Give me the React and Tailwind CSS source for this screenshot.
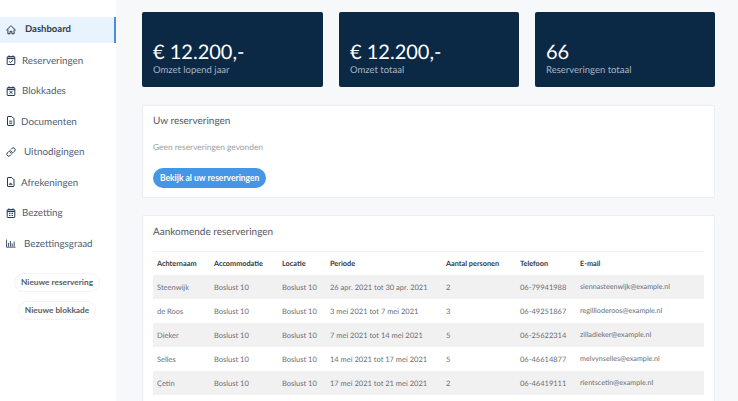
import React from 'react';

// Hand drawn nav icons, all on a 10x10 grid
const Svg = ({ children }) => (
  <svg width="10" height="10" viewBox="0 0 10 10" fill="none" stroke="#24384f" strokeWidth="1" className="-mt-[2px] shrink-0">
    {children}
  </svg>
);

const CalendarBase = ({ children }) => (
  <Svg>
    <rect x="1.2" y="1.6" width="7.6" height="7.9" rx="0.6" />
    <path d="M1.2 3.4h7.6" strokeWidth="1.4" />
    <path d="M3 0.4v1.6M7 0.4v1.6" />
    {children}
  </Svg>
);

const HomeIcon = () => (
  <Svg>
    <path d="M0.6 4.9 4.4 1.3a.9.9 0 0 1 1.2 0l3.8 3.6" strokeLinecap="round" />
    <path d="M1.9 4.4v4.4h2.2V6.4h1.8v2.4h2.2V4.4" strokeLinejoin="round" />
  </Svg>
);
const CheckIcon = () => <CalendarBase><path d="M3.1 6.4 4.4 7.6 6.9 5.2" /></CalendarBase>;
const CrossIcon = () => <CalendarBase><path d="M3.6 5 6.4 7.8M6.4 5 3.6 7.8" /></CalendarBase>;
const DocIcon = () => (
  <Svg>
    <path d="M1.5 1a.5.5 0 0 1 .5-.5h3.8L8 2.8V9a.5.5 0 0 1-.5.5H2a.5.5 0 0 1-.5-.5z" />
    <path d="M3.2 5.2h3M3.2 7.2h3" />
  </Svg>
);
const LinkIcon = () => (
  <Svg>
    <path d="M4.4 5.6a1.9 1.9 0 0 0 2.7 0l1.5-1.5a1.9 1.9 0 0 0-2.7-2.7l-.8.8" strokeLinecap="round" />
    <path d="M5.6 4.4a1.9 1.9 0 0 0-2.7 0L1.4 5.9a1.9 1.9 0 0 0 2.7 2.7l.8-.8" strokeLinecap="round" />
  </Svg>
);
const InvoiceIcon = () => (
  <Svg>
    <path d="M1.5 1a.5.5 0 0 1 .5-.5h3.8L8 2.8V9a.5.5 0 0 1-.5.5H2a.5.5 0 0 1-.5-.5z" />
    <path d="M3 7.6 4.4 5.9 6.4 7.6z" fill="#24384f" strokeWidth="0.5" />
  </Svg>
);
const GridIcon = () => (
  <CalendarBase><path d="M3 5.4h4M3 7.4h4" strokeDasharray="1 0.5" /></CalendarBase>
);
const ChartIcon = () => (
  <Svg>
    <path d="M0.5 1.5v7.7h9" strokeWidth="0.8" />
    <path d="M2.4 8.6V4.8M4.4 8.6V3M6.2 8.6V5.4M8.2 8.6V3.6" strokeWidth="0.9" />
  </Svg>
);

const navItems = [
  { label: 'Dashboard', icon: HomeIcon, active: true, gap: 'gap-[9px]' },
  { label: 'Reserveringen', icon: CheckIcon, gap: 'gap-[6px]' },
  { label: 'Blokkades', icon: CrossIcon, gap: 'gap-[6px]' },
  { label: 'Documenten', icon: DocIcon, gap: 'gap-[5px]' },
  { label: 'Uitnodigingen', icon: LinkIcon, gap: 'gap-[8px]' },
  { label: 'Afrekeningen', icon: InvoiceIcon, gap: 'gap-[5px]' },
  { label: 'Bezetting', icon: GridIcon, gap: 'gap-[6px]' },
  { label: 'Bezettingsgraad', icon: ChartIcon, gap: 'gap-[8px]' },
];

const stats = [
  { value: '€ 12.200,-', label: 'Omzet lopend jaar' },
  { value: '€ 12.200,-', label: 'Omzet totaal' },
  { value: '66', label: 'Reserveringen totaal' },
];

const rows = [
  ['Steenwijk', 'Boslust 10', 'Boslust 10', '26 apr. 2021 tot 30 apr. 2021', '2', '06-79941988', 'siennasteenwijk@example.nl'],
  ['de Roos', 'Boslust 10', 'Boslust 10', '3 mei 2021 tot 7 mei 2021', '3', '06-49251867', 'regillioderoos@example.nl'],
  ['Dieker', 'Boslust 10', 'Boslust 10', '7 mei 2021 tot 14 mei 2021', '5', '06-25622314', 'zilladieker@example.nl'],
  ['Selles', 'Boslust 10', 'Boslust 10', '14 mei 2021 tot 17 mei 2021', '5', '06-46614877', 'melvynselles@example.nl'],
  ['Çetin', 'Boslust 10', 'Boslust 10', '17 mei 2021 tot 21 mei 2021', '2', '06-46419111', 'rientscetin@example.nl'],
];

const headers = ['Achternaam', 'Accommodatie', 'Locatie', 'Periode', 'Aantal personen', 'Telefoon', 'E-mail'];
const colWidths = ['w-[57px]', 'w-[68px]', 'w-[48px]', 'w-[116px]', 'w-[74px]', 'w-[60px]', 'w-[128px]'];

const Sidebar = () => (
  <aside className="w-[116px] shrink-0 bg-white pt-[17px]">
    <nav className="flex flex-col">
      {navItems.map(({ label, icon: Icon, active, gap }) => (
        <a
          key={label}
          className={`flex h-[26px] mb-[4.5px] items-center pl-[6px] pt-[1px] ${gap} ${
            active
              ? 'bg-[#e9f3fd] border-r-2 border-[#4a90d9] text-[9.5px] font-bold text-[#2c3e50]'
              : 'text-[9.8px] text-[#4f6075]'
          }`}
        >
          <Icon />
          {label}
        </a>
      ))}
    </nav>

    {/* Quick actions */}
    <div className="mt-[12px] flex flex-col items-center gap-[9px] pr-[2px]">
      <button className="h-[19px] rounded-full border border-[#f2f3f5] px-[6px] text-[8.3px] font-bold text-[#555c64]">
        Nieuwe reservering
      </button>
      <button className="h-[19px] rounded-full border border-[#f2f3f5] px-[6px] text-[8.3px] font-bold text-[#555c64]">
        Nieuwe blokkade
      </button>
    </div>
  </aside>
);

const App = () => (
  <div className="flex h-[401px] w-[738px] overflow-hidden bg-[#f7f8fa] font-['Lato',sans-serif] [text-rendering:geometricPrecision]">
    <Sidebar />

    <main className="w-[599px] pl-[26px] pt-[12px]">
      <div className="grid w-[573px] grid-cols-[181px_180px_180px] gap-[16px]">
        {stats.map((stat) => (
          <div key={stat.label} className="flex h-[75px] flex-col justify-end rounded-[2px] bg-[#0b2845] px-[11px] pb-[11px]">
            <p className="mb-[1px] text-[20px] leading-[24px] text-white">{stat.value}</p>
            <p className="text-[9.5px] leading-[11px] text-[#a9b4c0]">{stat.label}</p>
          </div>
        ))}
      </div>

      <section className="mt-[18px] h-[93px] w-[573px] rounded-[2px] border border-[#eceef1] bg-white px-[10px] pt-[8px]">
        <h2 className="text-[10px] leading-[14px] text-[#52585f]">Uw reserveringen</h2>
        <p className="mt-[13px] text-[8.4px] leading-[12px] text-[#9a9fa5]">Geen reserveringen gevonden</p>
        <button className="mt-[15px] h-[20px] rounded-full bg-[#4596e6] px-[7px] text-[8.5px] font-bold text-white">
          Bekijk al uw reserveringen
        </button>
      </section>

      <section className="mt-[17px] h-[200px] w-[573px] rounded-[2px] border border-[#eceef1] bg-white px-[10px] pt-[9px]">
        <h2 className="text-[10px] leading-[14px] text-[#52585f]">Aankomende reserveringen</h2>
        <table className="mt-[12px] w-[551px] table-fixed border-t border-[#eeeff1] text-left text-[7.5px]">
          <colgroup>
            {colWidths.map((width) => (
              <col key={width} className={width} />
            ))}
          </colgroup>
          <thead>
            <tr className="h-[23px] text-[7.3px] text-[#333a41]">
              {headers.map((header) => (
                <th key={header} className="px-[4px] pt-[2px] font-bold whitespace-nowrap">{header}</th>
              ))}
            </tr>
          </thead>
          <tbody>
            {rows.map((row, i) => (
              <tr key={row[0]} className={`h-[24px] text-[#6b7076] ${i % 2 === 0 ? 'bg-[#f1f1f2]' : ''}`}>
                {row.map((cell, j) => (
                  <td key={j} className={`px-[4px] pt-[2px] whitespace-nowrap ${j === 6 ? 'text-[7.2px]' : ''}`}>{cell}</td>
                ))}
              </tr>
            ))}
          </tbody>
        </table>
      </section>
    </main>
  </div>
);

export default App;
